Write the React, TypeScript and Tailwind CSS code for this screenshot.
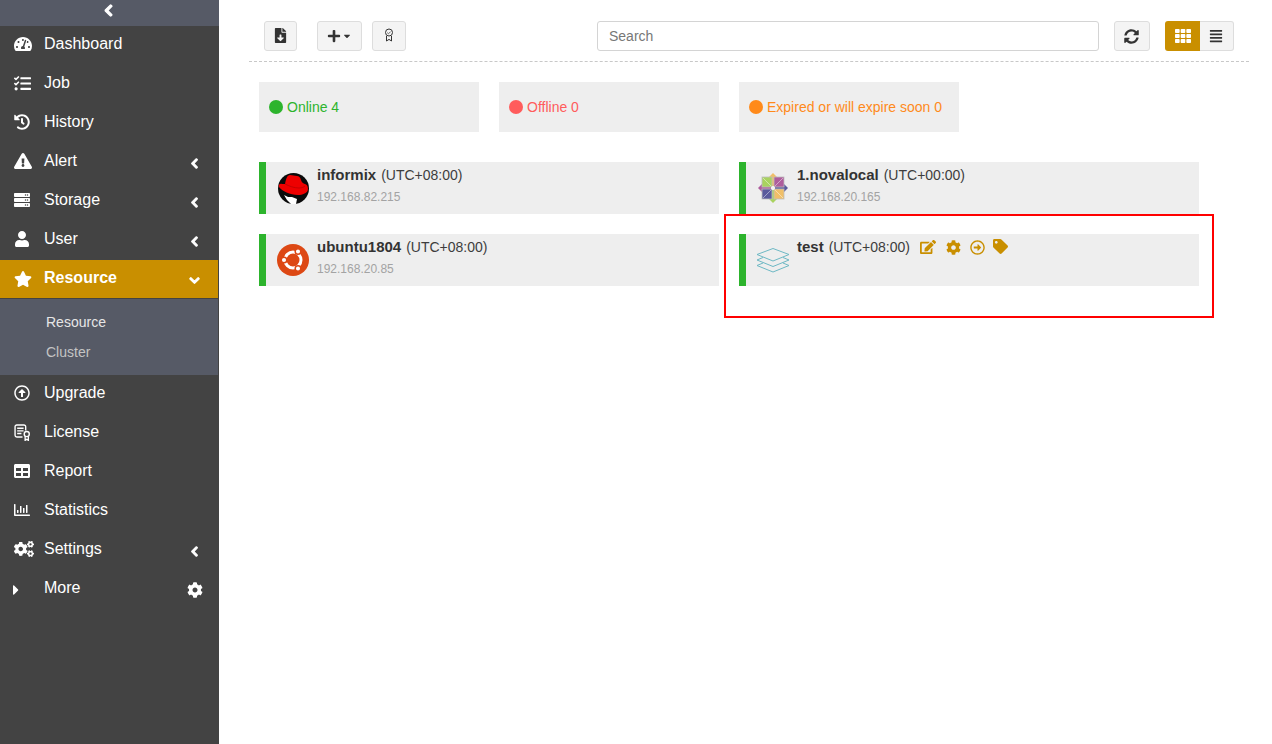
import React from "react";
import {
  FaTachometerAlt, FaTasks, FaHistory, FaExclamationTriangle, FaServer, FaUser, FaStar,
  FaRegArrowAltCircleUp, FaTable, FaRegChartBar, FaCogs, FaChevronLeft, FaChevronDown,
  FaCaretRight, FaCog, FaFileDownload, FaPlus, FaCaretDown, FaSyncAlt, FaTh, FaAlignJustify,
  FaEdit, FaRegArrowAltCircleRight, FaTag,
} from "react-icons/fa";

const LicenseIcon = () => (
  <svg width="17" height="17" viewBox="0 0 16 16" fill="none" stroke="currentColor" strokeWidth="1.3">
    <path d="M11 6V2.600A1.600 1.600 0 0 0 9.400 1H2.600A1.600 1.600 0 0 0 1 2.600v8A1.600 1.600 0 0 0 2.600 12.200H8" />
    <path d="M3 4h6M3 6.500h6M3 9h4" />
    <circle cx="12" cy="9.500" r="2.400" />
    <path d="M10.500 11.500V15.400l1.500-1 1.500 1V11.500" />
  </svg>
);

const Ribbon = () => (
  <svg width="10" height="14" viewBox="0 0 10 14" fill="none" stroke="#333" strokeWidth="1" className="mb-[3px]">
    <circle cx="5" cy="4.500" r="3.500" />
    <path d="M3.200 4.600l1.300 1.200 2.200-2.200" stroke="#666" />
    <path d="M2.500 8v5l2.500-1.600L7.500 13V8" />
  </svg>
);

const RedHat = () => (
  <svg width="32" height="32" viewBox="0 0 32 32">
    <circle cx="16.500" cy="16.500" r="15.500" fill="#0a0a0a" />
    <path d="M7 23l3 5 4 4h5l1-5-5-2-4 0z" fill="#fff" />
    <path d="M8 12C9 7 10 3 13 3c3 0 4 1 7 1 2 0 3 1 4 4 1 3 2 3 4 4 3 1 3 4 3 5 0 4-6 6-10 6C13 23 5 19 2 15c-1-2 1-4 3-3z" fill="#ee0000" />
    <path d="M8 12c4 2 9 4 14 4 3 0 5-1 6-2" fill="none" stroke="#b30000" strokeWidth=".7" />
  </svg>
);

const Ubuntu = () => (
  <svg width="32" height="32" viewBox="0 0 32 32">
    <circle cx="16" cy="16" r="16" fill="#dd4814" />
    <circle cx="16" cy="16" r="8" fill="none" stroke="#fff" strokeWidth="3" />
    <circle cx="7" cy="16" r="2.800" fill="#fff" stroke="#dd4814" strokeWidth="1.500" />
    <circle cx="21" cy="7.500" r="2.800" fill="#fff" stroke="#dd4814" strokeWidth="1.500" />
    <circle cx="21" cy="24.500" r="2.800" fill="#fff" stroke="#dd4814" strokeWidth="1.500" />
  </svg>
);

const Centos = () => (
  <svg width="32" height="32" viewBox="0 0 32 32">
    <path d="M16 1l4 4-2 9h-4l-2-9z" fill="#f0bf68" />
    <path d="M31 16l-4 4-9-2v-4l9-2z" fill="#5a5a9c" />
    <path d="M16 31l-4-4 2-9h4l2 9z" fill="#a9d25f" />
    <path d="M1 16l4-4 9 2v4l-9 2z" fill="#ae5d9c" />
    <rect x="5" y="5" width="10" height="10" fill="#a9d25f" stroke="#bdbdbd" strokeWidth=".8" />
    <rect x="17" y="5" width="10" height="10" fill="#ae5d9c" stroke="#bdbdbd" strokeWidth=".8" />
    <rect x="5" y="17" width="10" height="10" fill="#5a5a9c" stroke="#bdbdbd" strokeWidth=".8" />
    <rect x="17" y="17" width="10" height="10" fill="#f0bf68" stroke="#bdbdbd" strokeWidth=".8" />
    <path d="M6 6l8 8M18 14l8-8M6 26l8-8M18 18l8 8" stroke="#fff" strokeWidth="1" opacity=".45" />
    <circle cx="16" cy="16" r="2" fill="#f2f2f2" />
  </svg>
);

const Layers = () => (
  <svg width="34" height="25" viewBox="0 0 34 25" fill="none" stroke="#6db8c4" strokeWidth="1" className="-ml-[1px] mt-[4px]">
    <path d="M17 .5L33 6.500 17 13 1 6.500z" />
    <path d="M7 9.500L1 12l16 6.500L33 12l-6-2.500" />
    <path d="M7 15L1 17.500 17 24l16-6.500L27 15" />
  </svg>
);

const items: [string, React.ReactNode, boolean][] = [
  ["Dashboard", <FaTachometerAlt size={18} />, false],
  ["Job", <FaTasks size={17} />, false],
  ["History", <FaHistory size={16} />, false],
  ["Alert", <FaExclamationTriangle size={18} />, true],
  ["Storage", <FaServer size={16} />, true],
  ["User", <FaUser size={16} />, true],
];
const items2: [string, React.ReactNode, boolean][] = [
  ["Upgrade", <FaRegArrowAltCircleUp size={16} />, false],
  ["License", <LicenseIcon />, false],
  ["Report", <FaTable size={16} />, false],
  ["Statistics", <FaRegChartBar size={16} />, false],
  ["Settings", <FaCogs size={20} />, true],
];

function Row({ label, icon, chev }: { label: string; icon: React.ReactNode; chev: boolean }) {
  return (
    <div className="flex h-[39px] items-center pl-[14px] pr-[19px] pb-[3px] text-white">
      <span className="flex w-[30px] shrink-0 items-center">{icon}</span>
      <span className="flex-1 text-[16px]">{label}</span>
      {chev && <FaChevronLeft size={11} stroke="currentColor" strokeWidth={50} className="mt-[4px]" />}
    </div>
  );
}

const Tb = ({ children, className }: { children: React.ReactNode; className: string }) => (
  <div className={`flex h-[30px] items-center justify-center rounded-[3px] border border-[#dddddd] bg-[#f4f4f4] text-[#333] ${className}`}>
    {children}
  </div>
);

function Stat({ color, label }: { color: string; label: string }) {
  return (
    <div className="flex h-[50px] w-[220px] items-center gap-[4px] bg-[#eeeeee] pl-[10px] text-[14px]" style={{ color }}>
      <span className="h-[14px] w-[14px] rounded-full" style={{ background: color }} />
      <span>{label}</span>
    </div>
  );
}

function Card({ name, tz, ip, logo, actions }: { name: string; tz: string; ip?: string; logo: React.ReactNode; actions?: boolean }) {
  return (
    <div className="flex h-[52px] w-[460px] border-l-[7px] border-[#2db42d] bg-[#eeeeee]">
      <div className="w-[51px] shrink-0 pl-[11px] pt-[10px]">{logo}</div>
      <div className="pt-[3px]">
        <div className="flex h-[20px] items-center text-[14px] text-[#3d3d3d]">
          <span className="text-[15px] font-bold text-[#333]">{name}</span>
          <span className="ml-[5px]">{tz}</span>
          {actions && (
            <span className="ml-[10px] flex items-center gap-[10px] text-[#c98f00]">
              <FaEdit size={16} />
              <FaCog size={15} className="-mr-[1px]" />
              <FaRegArrowAltCircleRight size={15} />
              <FaTag size={15} className="mb-[2px] -ml-[2px]" />
            </span>
          )}
        </div>
        {ip && <div className="mt-[2px] text-[12px] leading-[20px] text-[#a3a3a3]">{ip}</div>}
      </div>
    </div>
  );
}

export default function App() {
  return (
    <div className="relative flex h-[744px] w-[1272px] overflow-hidden bg-white font-['Liberation_Sans',sans-serif]">
      <aside className="w-[219px] shrink-0 bg-[#434343]">
        <div className="flex h-[26px] items-center justify-center bg-[#565a66] pb-[5px] pr-[2px] text-white">
          <FaChevronLeft size={13} stroke="currentColor" strokeWidth={50} />
        </div>
        {items.map(([l, i, c]) => <Row key={l} label={l} icon={i} chev={c} />)}
        <div className="flex h-[38px] w-[218px] items-center bg-[#c98f00] pb-[2px] pl-[14px] pr-[18px] text-white">
          <span className="flex w-[30px] shrink-0 pt-[2px]"><FaStar size={18} /></span>
          <span className="flex-1 text-[16px] font-bold">Resource</span>
          <FaChevronDown size={11} stroke="currentColor" strokeWidth={50} className="mt-[4px]" />
        </div>
        <div className="mt-px flex h-[76px] w-[218px] flex-col bg-[#565a66] pt-[8px] text-[14px]">
          <div className="flex h-[30px] items-center pl-[46px] text-[#e6e6e6]">Resource</div>
          <div className="flex h-[30px] items-center pl-[46px] text-[#c4c4c4]">Cluster</div>
        </div>
        {items2.map(([l, i, c]) => <Row key={l} label={l} icon={i} chev={c} />)}
        <div className="flex h-[39px] items-center pl-[14px] pr-[16px] text-white">
          <span className="flex w-[30px] shrink-0"><FaCaretRight size={16} className="-ml-[6px]" /></span>
          <span className="mb-[3px] flex-1 text-[16px]">More</span>
          <FaCog size={16} />
        </div>
      </aside>

      <main className="flex-1 pl-[30px] pr-[23px]">
        <div className="flex h-[62px] items-start border-b border-dashed border-[#c8c8c8] pl-[15px] pr-[15px] pt-[21px]">
          <Tb className="w-[33px] pb-[1px] pr-[1px]"><FaFileDownload size={15} /></Tb>
          <Tb className="ml-[20px] w-[45px]"><FaPlus size={14} /><FaCaretDown size={10} className="ml-[1px]" /></Tb>
          <Tb className="ml-[10px] w-[34px]"><Ribbon /></Tb>
          <input
            readOnly
            placeholder="Search"
            className="ml-[191px] h-[30px] w-[502px] rounded-[3px] border border-[#d4d4d4] bg-white px-[11px] text-[14px] text-[#555] outline-none placeholder:text-[#777]"
          />
          <Tb className="ml-[15px] w-[36px] pr-[1px]"><FaSyncAlt size={15} /></Tb>
          <div className="ml-[15px] flex">
            <div className="flex h-[30px] w-[35px] items-center justify-center rounded-l-[3px] bg-[#c98f00] pb-[1px] text-white"><FaTh size={16} /></div>
            <div className="flex h-[30px] w-[34px] items-center justify-center rounded-r-[3px] border border-l-0 border-[#dddddd] bg-[#f4f4f4] pb-[1px] pr-[2px] text-[#333]"><FaAlignJustify size={14} /></div>
          </div>
        </div>

        <div className="ml-[10px] mt-[20px] flex gap-[20px]">
          <Stat color="#2db42d" label="Online 4" />
          <Stat color="#ff5c5c" label="Offline 0" />
          <Stat color="#ff8a1a" label="Expired or will expire soon 0" />
        </div>

        <div className="ml-[10px] mt-[30px] grid w-[940px] grid-cols-2 gap-x-[20px] gap-y-[20px]">
          <Card name="informix" tz="(UTC+08:00)" ip="192.168.82.215" logo={<RedHat />} />
          <Card name="1.novalocal" tz="(UTC+00:00)" ip="192.168.20.165" logo={<Centos />} />
          <Card name="ubuntu1804" tz="(UTC+08:00)" ip="192.168.20.85" logo={<Ubuntu />} />
          <Card name="test" tz="(UTC+08:00)" logo={<Layers />} actions />
        </div>
      </main>

      <div className="pointer-events-none absolute left-[724px] top-[214px] h-[104px] w-[490px] border-2 border-[#ff0000]" />
    </div>
  );
}
